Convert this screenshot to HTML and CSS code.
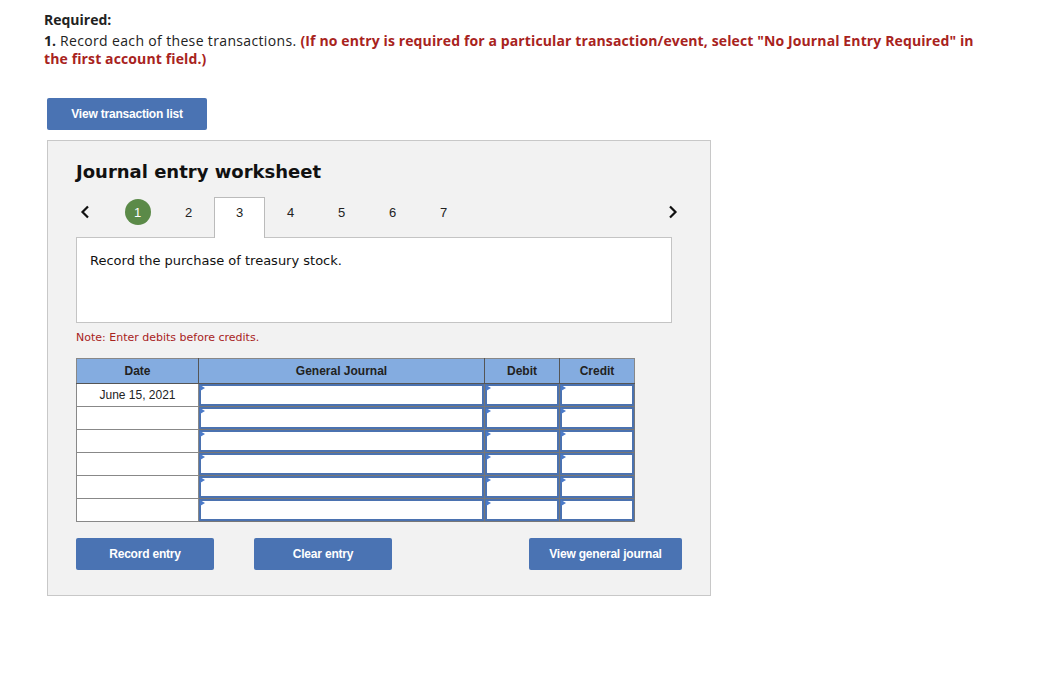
FILE: index.html
```html
<!DOCTYPE html>
<html>
<head>
<meta charset="utf-8">
<link rel="stylesheet" href="styles.css">
</head>
<body>
<div class="page">
  <div class="req">
    <div class="req-title">Required:</div>
    <div class="req-text"><b class="num">1.</b><span class="reg"> Record each of these transactions. </span><span class="red">(If no entry is required for a particular transaction/event, select "No Journal Entry Required" in the first account field.)</span></div>
  </div>
  <button class="btn btn-list">View transaction list</button>
  <div class="panel">
    <h2 class="ws-title">Journal entry worksheet</h2>
    <div class="tabs">
      <span class="arrow left"><svg width="10" height="14" viewBox="0 0 10 14"><path d="M8 1.5 L2.5 7 L8 12.5" fill="none" stroke="#111" stroke-width="2.2"/></svg></span>
      <span class="tab"><span class="done">1</span></span>
      <span class="tab">2</span>
      <span class="tab active">3</span>
      <span class="tab">4</span>
      <span class="tab">5</span>
      <span class="tab">6</span>
      <span class="tab">7</span>
      <span class="spacer"></span>
      <span class="arrow right"><svg width="10" height="14" viewBox="0 0 10 14"><path d="M2 1.5 L7.5 7 L2 12.5" fill="none" stroke="#111" stroke-width="2.2"/></svg></span>
    </div>
    <div class="desc">Record the purchase of treasury stock.</div>
    <div class="note">Note: Enter debits before credits.</div>
    <table class="journal">
      <thead>
        <tr><th class="c-date">Date</th><th class="c-gj">General Journal</th><th class="c-dr">Debit</th><th class="c-cr">Credit</th></tr>
      </thead>
      <tbody>
        <tr><td class="date">June 15, 2021</td><td><div class="inp"></div></td><td><div class="inp"></div></td><td><div class="inp"></div></td></tr>
        <tr><td class="date"></td><td><div class="inp"></div></td><td><div class="inp"></div></td><td><div class="inp"></div></td></tr>
        <tr><td class="date"></td><td><div class="inp"></div></td><td><div class="inp"></div></td><td><div class="inp"></div></td></tr>
        <tr><td class="date"></td><td><div class="inp"></div></td><td><div class="inp"></div></td><td><div class="inp"></div></td></tr>
        <tr><td class="date"></td><td><div class="inp"></div></td><td><div class="inp"></div></td><td><div class="inp"></div></td></tr>
        <tr><td class="date"></td><td><div class="inp"></div></td><td><div class="inp"></div></td><td><div class="inp"></div></td></tr>
      </tbody>
    </table>
    <div class="actions">
      <button class="btn btn-rec">Record entry</button>
      <button class="btn btn-clear">Clear entry</button>
      <span class="spacer"></span>
      <button class="btn btn-view">View general journal</button>
    </div>
  </div>
</div>
</body>
</html>
```
FILE: styles.css
```css
html, body {
  margin: 0;
  padding: 0;
  background: #fff;
}
.page {
  padding: 11px 44px 0 44px;
  font-family: "Open Sans", "Liberation Sans", sans-serif;
}
.req {
  width: 945px;
  font-size: 14px;
  line-height: 18px;
  color: #222;
}
.req-title {
  font-weight: 700;
  margin-bottom: 3px;
}
.num {
  font-weight: 700;
}
.reg {
  font-weight: 400;
  letter-spacing: 0.35px;
}
.red {
  color: #a8231d;
  font-weight: 700;
  letter-spacing: 0.12px;
}
.btn {
  font-family: "Liberation Sans", Arial, sans-serif;
  font-weight: 700;
  font-size: 12px;
  color: #fff;
  background: #4a73b3;
  border: none;
  border-radius: 2px;
  height: 32px;
  padding: 0;
  letter-spacing: -0.2px;
  cursor: pointer;
}
.btn-list {
  display: block;
  margin: 30px 0 0 3px;
  width: 160px;
}
.panel {
  margin: 10px 0 0 3px;
  width: 606px;
  height: 424px;
  background: #f2f2f2;
  border: 1px solid #c8c8c8;
  padding: 20px 28px 10px 28px;
  font-family: "DejaVu Sans", Verdana, sans-serif;
}
.ws-title {
  margin: 0;
  font-size: 18px;
  font-weight: 700;
  color: #111;
  line-height: 22px;
}
.tabs {
  display: flex;
  align-items: stretch;
  height: 40px;
  margin-top: 14px;
  font-family: "Liberation Sans", Arial, sans-serif;
  font-size: 13px;
  color: #222;
}
.arrow {
  display: flex;
  align-items: flex-start;
  padding-top: 8px;
  box-sizing: border-box;
  width: 20px;
}
.arrow.left {
  padding-left: 4px;
  width: 36px;
}
.arrow.right {
  justify-content: flex-end;
  width: 14px;
  margin-right: 4px;
}
.tab {
  width: 51px;
  display: flex;
  align-items: flex-start;
  justify-content: center;
  box-sizing: border-box;
  padding-top: 8px;
}
.tab.active {
  background: #fff;
  border: 1px solid #bbb;
  border-bottom: none;
  padding-top: 7px;
  height: 41px;
  margin-bottom: -1px;
  z-index: 1;
}
.done {
  width: 26px;
  height: 26px;
  margin-top: -6px;
  border-radius: 50%;
  background: #5b8a48;
  color: #fff;
  display: flex;
  align-items: center;
  justify-content: center;
  font-size: 13px;
}
.spacer {
  flex: 1;
}
.desc {
  width: 596px;
  box-sizing: border-box;
  height: 86px;
  background: #fff;
  border: 1px solid #c4c4c4;
  padding: 15px 13px;
  font-size: 13px;
  color: #111;
}
.note {
  margin-top: 8px;
  font-size: 11px;
  color: #a8231d;
  height: 14px;
}
.journal {
  margin-top: 13px;
  border-collapse: collapse;
  font-family: "Liberation Sans", Arial, sans-serif;
  font-size: 12px;
}
.journal th {
  background: #84ace0;
  color: #222;
  font-weight: 700;
  height: 24px;
  border: 1px solid #555;
  border-top-color: #888;
  padding: 0;
}
.journal th.c-date { width: 121px; border-left-color: #888; }
.journal th.c-gj { width: 285px; }
.journal th.c-dr { width: 74px; }
.journal th.c-cr { width: 74px; border-right-color: #888; }
.journal td {
  height: 22px;
  padding: 0;
  border: 1px solid #777;
  background: #fff;
}
.journal td.date {
  text-align: center;
  color: #222;
  border-color: #888;
}
.inp {
  position: relative;
  height: 22px;
  box-sizing: border-box;
  border: 2px solid #4b72b0;
  background: #fff;
}
.inp::before {
  content: "";
  position: absolute;
  left: -1px;
  top: -1px;
  border-left: 5px solid #4b7ac8;
  border-top: 3.5px solid transparent;
  border-bottom: 3.5px solid transparent;
}
.actions {
  display: flex;
  margin-top: 16px;
}
.btn-rec { width: 138px; }
.btn-clear { width: 138px; margin-left: 40px; }
.btn-view { width: 153px; }
```
